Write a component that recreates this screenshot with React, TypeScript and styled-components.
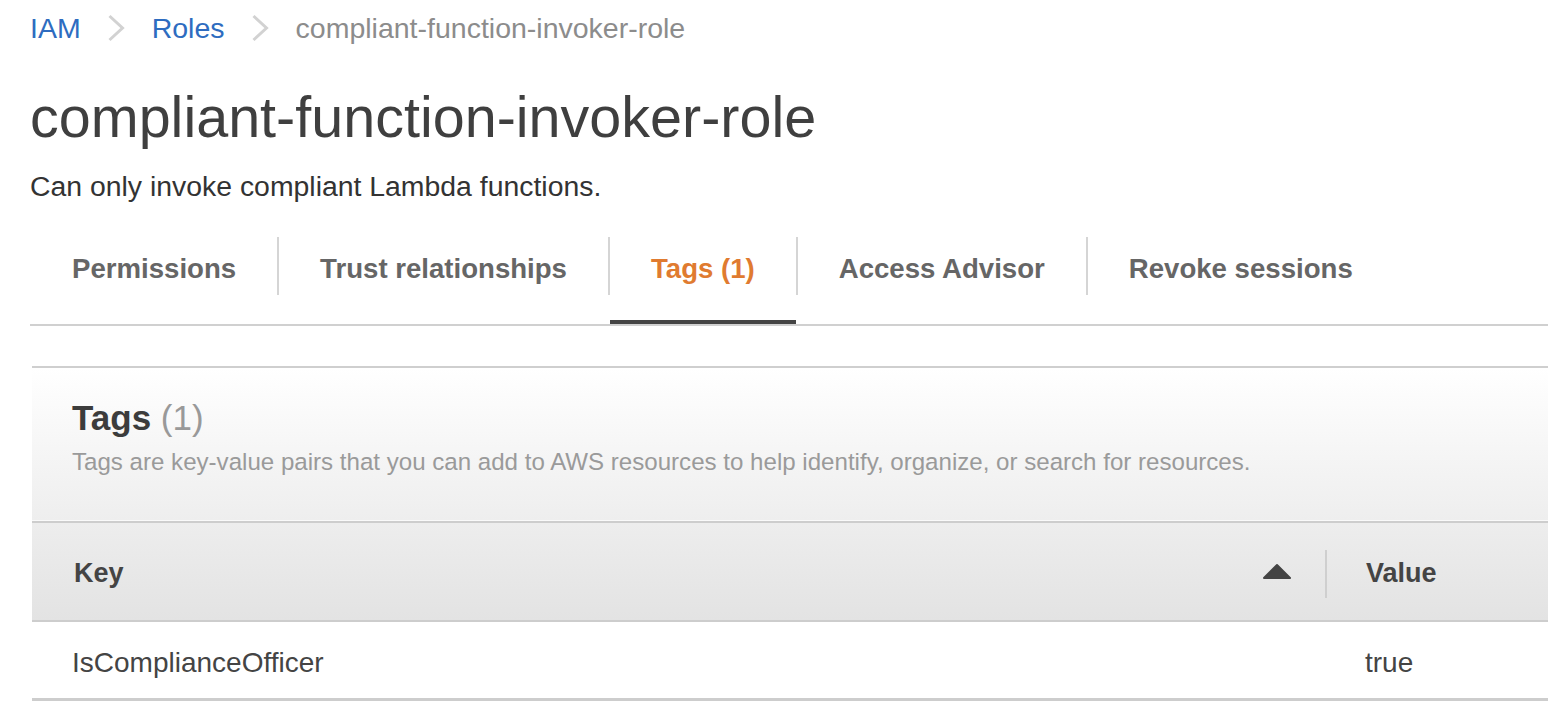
import styled, { createGlobalStyle } from "styled-components";

const GlobalStyle = createGlobalStyle`
  html, body {
    margin: 0;
    padding: 0;
    background: #fff;
    overflow: hidden;
  }
  body {
    font-family: "Liberation Sans", Arial, Helvetica, sans-serif;
    color: #444;
  }
`;

const tabs = [
  { label: "Permissions" },
  { label: "Trust relationships" },
  { label: "Tags (1)", active: true },
  { label: "Access Advisor" },
  { label: "Revoke sessions" },
];

const Chevron = () => (
  <svg width="17" height="28" viewBox="0 0 17 28">
    <path d="M1.5 2 L14.5 14 L1.5 26" fill="none" stroke="#d2d2d2" strokeWidth="3" />
  </svg>
);

const SortUp = () => (
  <svg width="30" height="17" viewBox="0 0 30 17">
    <path d="M15 2 L28 15 L2 15 Z" fill="#444" stroke="#444" strokeWidth="2" strokeLinejoin="round" />
  </svg>
);

export default function App() {
  return (
    <>
      <GlobalStyle />
      <Page>
        <Breadcrumb>
          <Crumb href="#">IAM</Crumb>
          <Chevron />
          <Crumb href="#">Roles</Crumb>
          <Chevron />
          <Current>compliant-function-invoker-role</Current>
        </Breadcrumb>

        <Title>compliant-function-invoker-role</Title>
        <Description>Can only invoke compliant Lambda functions.</Description>

        <TabBar>
          {tabs.map((t, i) => (
            <TabGroup key={t.label}>
              {i > 0 && <Divider />}
              <Tab $active={t.active} $first={i === 0}>
                {t.label}
              </Tab>
            </TabGroup>
          ))}
        </TabBar>

        <Panel>
          <PanelHeader>
            <PanelTitle>
              Tags <Count>(1)</Count>
            </PanelTitle>
            <PanelHint>
              Tags are key-value pairs that you can add to AWS resources to help identify, organize, or search for resources.
            </PanelHint>
          </PanelHeader>

          <Table>
            <HeadRow>
              <HeadCell>
                Key
                <SortIcon>
                  <SortUp />
                </SortIcon>
              </HeadCell>
              <HeadCell $divider>Value</HeadCell>
            </HeadRow>
            <BodyRow>
              <Cell>IsComplianceOfficer</Cell>
              <Cell>true</Cell>
            </BodyRow>
          </Table>
        </Panel>
      </Page>
    </>
  );
}

const Page = styled.div`
  width: 1600px;
  padding: 11px 0 0 30px;
`;

const Breadcrumb = styled.nav`
  display: flex;
  align-items: center;
  gap: 27px;
  font-size: 28.5px;
  line-height: 1.2;
`;

const Crumb = styled.a`
  color: #2e6cc0;
  text-decoration: none;
`;

const Current = styled.span`
  color: #8c8c8c;
`;

const Title = styled.h1`
  margin: 38px 0 0;
  font-size: 57.5px;
  font-weight: 400;
  line-height: 1.2;
  color: #3f3f3f;
`;

const Description = styled.p`
  margin: 17px 0 0;
  font-size: 28.4px;
  line-height: 1.2;
  color: #333;
`;

const TabBar = styled.div`
  display: flex;
  margin-top: 34px;
  border-bottom: 2px solid #d0d0d0;
`;

const TabGroup = styled.div`
  display: flex;
  align-items: flex-start;
`;

const Divider = styled.span`
  width: 2px;
  height: 58px;
  background: #d5d5d5;
`;

const Tab = styled.div<{ $active?: boolean; $first?: boolean }>`
  box-sizing: border-box;
  height: 87px;
  padding: 0 41px 21px ${(p) => (p.$first ? "42px" : "41px")};
  display: flex;
  align-items: center;
  font-size: 27.6px;
  font-weight: 700;
  line-height: 1.2;
  color: ${(p) => (p.$active ? "#e07b30" : "#666")};
  border-bottom: 4px solid ${(p) => (p.$active ? "#444" : "transparent")};
`;

const Panel = styled.section`
  margin: 40px 0 0 2px;
  border-top: 2px solid #cfcfcf;
`;

const PanelHeader = styled.div`
  box-sizing: border-box;
  height: 153px;
  padding: 29px 40px 0;
  background: linear-gradient(to bottom, #ffffff, #eeeeee);
  border-bottom: 1px solid #fafafa;
`;

const PanelTitle = styled.h2`
  margin: 0;
  font-size: 35px;
  font-weight: 700;
  line-height: 1.2;
  color: #3c3c3c;
`;

const Count = styled.span`
  font-weight: 400;
  color: #999;
`;

const PanelHint = styled.p`
  margin: 9px 0 0;
  font-size: 24.1px;
  line-height: 1.2;
  color: #9a9a9a;
`;

const Table = styled.div`
  border-top: 2px solid #cdcdcd;
`;

const HeadRow = styled.div`
  display: grid;
  grid-template-columns: 1293px 1fr;
  box-sizing: border-box;
  height: 99px;
  padding-top: 4px;
  align-items: center;
  background: linear-gradient(to bottom, #ededed, #e3e3e3);
  border-bottom: 2px solid #cdcdcd;
`;

const HeadCell = styled.div<{ $divider?: boolean }>`
  display: flex;
  align-items: center;
  justify-content: space-between;
  height: 48px;
  padding: 0 0 0 ${(p) => (p.$divider ? "39px" : "42px")};
  font-size: 27px;
  font-weight: 700;
  color: #444;
  border-left: ${(p) => (p.$divider ? "2px solid #cfcfcf" : "none")};
`;

const SortIcon = styled.span`
  display: flex;
  margin-right: 33px;
  margin-top: -4px;
`;

const BodyRow = styled.div`
  display: grid;
  grid-template-columns: 1293px 1fr;
  box-sizing: border-box;
  height: 79px;
  padding-top: 5px;
  align-items: center;
  background: #fff;
  border-bottom: 3px solid #cdcdcd;
`;

const Cell = styled.div`
  padding-left: 40px;
  font-size: 28px;
  color: #444;
`;
